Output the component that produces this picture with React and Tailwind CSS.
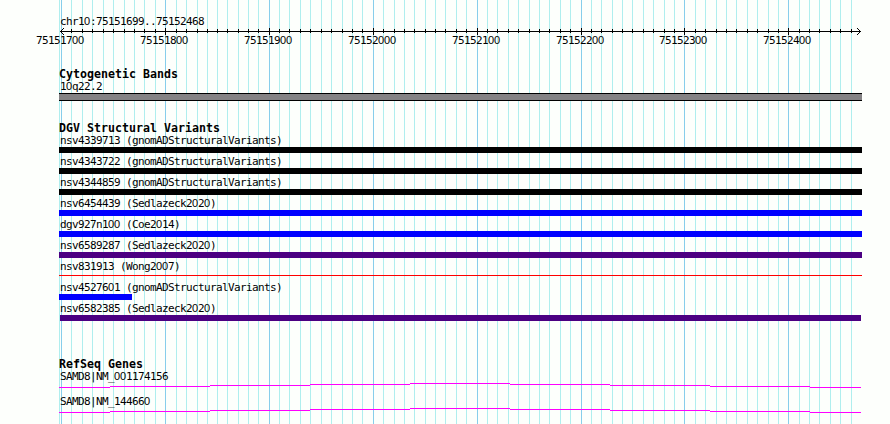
import React from "react";

const MINOR = [
  59, 71, 82, 92, 103, 113, 124, 134, 144, 155, 176, 186, 197, 207, 217, 227, 238, 248, 258,
  279, 289, 300, 310, 321, 331, 342, 352, 362, 383, 394, 404, 414, 425, 435, 445, 456, 466,
  487, 497, 508, 518, 529, 539, 549, 560, 570, 591, 601, 612, 622, 632, 643, 653, 664, 674,
  695, 705, 716, 726, 736, 747, 757, 768, 778, 799, 809, 819, 830, 840, 851,
];
const MAJOR = [61, 165, 269, 373, 477, 581, 684, 788];

const VARIANTS = [
  { label: "nsv4339713 (gnomADStructuralVariants)", bar: "h-1.5 bg-black" },
  { label: "nsv4343722 (gnomADStructuralVariants)", bar: "h-1.5 bg-black" },
  { label: "nsv4344859 (gnomADStructuralVariants)", bar: "h-1.5 bg-black" },
  { label: "nsv6454439 (Sedlazeck2020)", bar: "h-1.5 bg-[#0000ff]" },
  { label: "dgv927n100 (Coe2014)", bar: "h-1.5 bg-[#0000ff]" },
  { label: "nsv6589287 (Sedlazeck2020)", bar: "h-1.5 bg-[#4b0082]" },
  { label: "nsv831913 (Wong2007)", bar: "mt-[2px] h-px bg-[#ff0000]" },
  { label: "nsv4527601 (gnomADStructuralVariants)", bar: "h-1.5 w-[73px] bg-[#0000ff]" },
  { label: "nsv6582385 (Sedlazeck2020)", bar: "mx-px h-1.5 bg-[#4b0082]" },
];

// Vertical offset of each 100px wide piece of the gene line.
const GENE_STEPS = [
  [0, 51, 4],
  [51, 100, 3],
  [151, 100, 2],
  [251, 100, 1],
  [351, 100, 0],
  [451, 100, 1],
  [551, 100, 2],
  [651, 100, 3],
  [751, 51, 4],
];

// Fixed pitch text whose zeros carry no dot or slash.
function Mono({ children }) {
  return (
    <span className="block whitespace-pre pt-px font-['DejaVu_Sans_Mono',monospace] text-[11px] leading-[12px] tracking-[-0.622px] text-black">
      {children.split(/(0)/).map((part, i) =>
        part === "0" ? (
          <span key={i} className="font-['Liberation_Sans',sans-serif] leading-none tracking-[-0.117px]">0</span>
        ) : (
          part
        )
      )}
    </span>
  );
}

function Heading({ children }) {
  return (
    <h2 className="h-3 whitespace-pre font-['DejaVu_Sans_Mono',monospace] text-[11.6px] font-bold leading-[12px] tracking-[0.017px] text-black">
      {children}
    </h2>
  );
}

function Grid() {
  return (
    <svg className="absolute inset-0" width="890" height="424" shapeRendering="crispEdges">
      {MINOR.map((x) => (
        <rect key={x} x={x} y="0" width="1" height="424" fill="#afeeee" />
      ))}
      {MAJOR.map((x) => (
        <rect key={x} x={x} y="0" width="1" height="424" fill="#87ceeb" />
      ))}
    </svg>
  );
}

function Ruler() {
  return (
    <svg className="block" width="890" height="8" viewBox="0 28 890 8" shapeRendering="crispEdges">
      <rect x="60" y="31" width="801" height="1" />
      {MINOR.slice(1).map((x) => (
        <rect key={x} x={x} y="29" width="1" height="4" />
      ))}
      {MAJOR.slice(1).map((x) => (
        <rect key={x} x={x} y="28" width="1" height="7" />
      ))}
      {[0, 1, 2, 3].map((d) => (
        <g key={d}>
          <rect x={60 + d} y={31 - d} width="1" height="1" />
          <rect x={60 + d} y={31 + d} width="1" height="1" />
          <rect x={860 - d} y={31 - d} width="1" height="1" />
          <rect x={860 - d} y={31 + d} width="1" height="1" />
        </g>
      ))}
    </svg>
  );
}

function Gene({ label }) {
  return (
    <div className="h-[25px]">
      <div className="h-[13px] pl-px">
        <Mono>{label}</Mono>
      </div>
      <svg className="block" width="802" height="5" shapeRendering="crispEdges">
        {GENE_STEPS.map(([x, w, y]) => (
          <rect key={x} x={x} y={y} width={w} height="1" fill="#ff00ff" />
        ))}
      </svg>
    </div>
  );
}

export default function App() {
  return (
    <div className="relative h-[424px] w-[890px] overflow-hidden bg-[#fdfffc]">
      <Grid />
      <main className="relative pt-[15px]">
        <div className="h-[13px] pl-[60px]">
          <Mono>chr10:75151699..75152468</Mono>
        </div>
        <Ruler />
        <div className="-mt-[2px] grid h-3 grid-cols-[104px_104px_104px_104px_104px_103px_104px_104px] pl-[36px]">
          {[75151700, 75151800, 75151900, 75152000, 75152100, 75152200, 75152300, 75152400].map((n) => (
            <Mono key={n}>{String(n)}</Mono>
          ))}
        </div>

        <section className="mt-[22px] ml-[59px] w-[803px]">
          <Heading>Cytogenetic Bands</Heading>
          <div className="h-[13px] pl-px">
            <Mono>10q22.2</Mono>
          </div>
          <div className="h-2 border-y border-black bg-[#848284]" />
        </section>

        <section className="mt-[21px] ml-[59px] w-[803px]">
          <Heading>DGV Structural Variants</Heading>
          {VARIANTS.map((v) => (
            <div key={v.label} className="flex h-[21px] flex-col">
              <div className="h-[13px] pl-px">
                <Mono>{v.label}</Mono>
              </div>
              <div className={v.bar} />
            </div>
          ))}
        </section>

        <section className="mt-[35px] ml-[59px] w-[803px]">
          <Heading>RefSeq Genes</Heading>
          <Gene label="SAMD8|NM_001174156" />
          <Gene label="SAMD8|NM_144660" />
        </section>
      </main>
    </div>
  );
}
